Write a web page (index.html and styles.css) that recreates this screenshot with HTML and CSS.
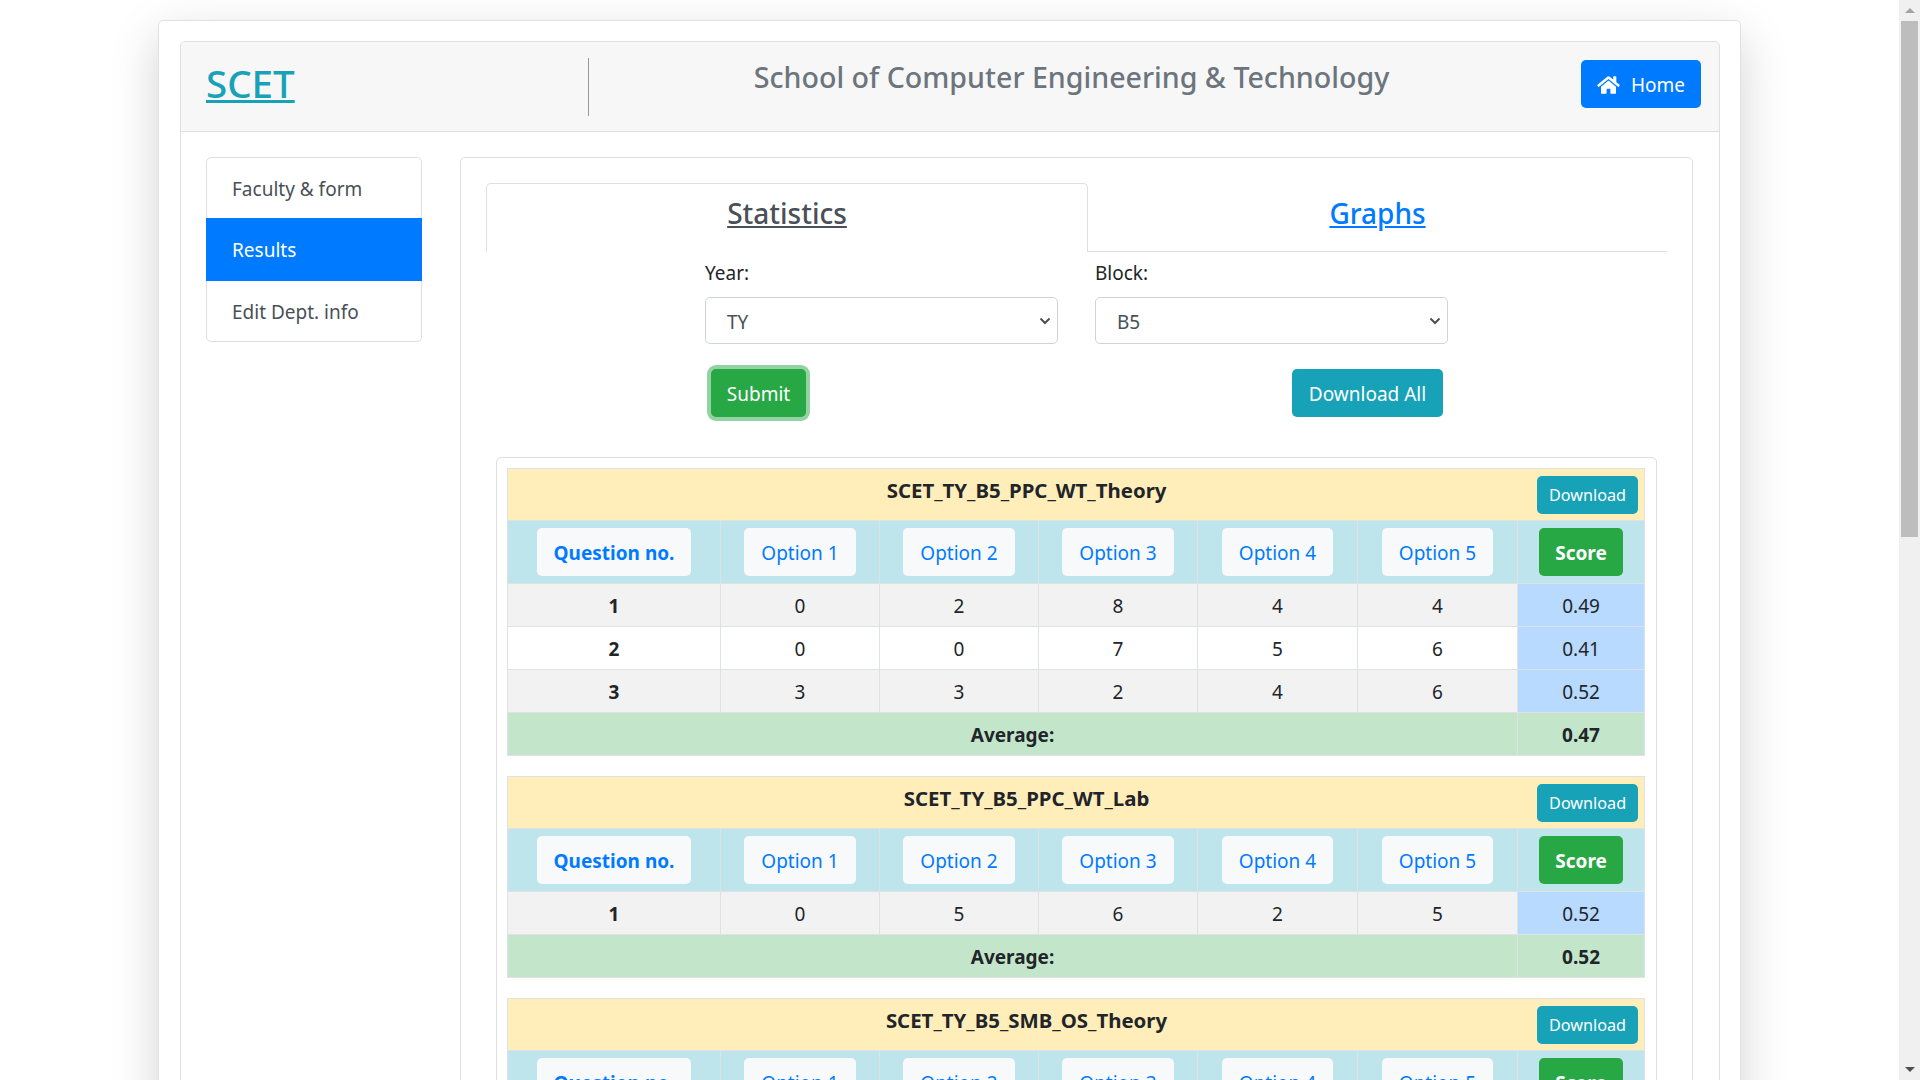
FILE: index.html
```html
<!DOCTYPE html>
<html>
<head>
	<meta charset="utf-8">
	<title>SCET</title>
	<link rel="stylesheet" href="styles.css">
</head>

<body>
	<div class="page">
		<div class="card">
			<div class="inner">
				<div class="top">
					<div class="brand"><a href="#">SCET</a></div>
					<div class="school"><h3>School of Computer Engineering &amp; Technology</h3></div>
					<a class="btn btn-home" href="#">
						<svg class="home-icon" viewBox="0 0 576 512"><path fill="currentColor" d="M280.4 148.3L96 300.1V464a16 16 0 0 0 16 16l112.100-.3a16 16 0 0 0 15.900-16V368a16 16 0 0 1 16-16h64a16 16 0 0 1 16 16v95.600a16 16 0 0 0 16 16.100L464 480a16 16 0 0 0 16-16V300L295.700 148.300a12.200 12.200 0 0 0-15.300 0zM571.600 251.500L488 182.600V44.100a12 12 0 0 0-12-12h-56a12 12 0 0 0-12 12v72.600L318.500 43a48 48 0 0 0-61 0L4.300 251.500a12 12 0 0 0-1.600 16.900l25.500 31A12 12 0 0 0 45.200 301l235.200-193.700a12.200 12.200 0 0 1 15.300 0L530.900 301a12 12 0 0 0 16.900-1.600l25.500-31a12 12 0 0 0-1.700-16.900z"/></svg>
						Home
					</a>
				</div>
				<div class="content">
					<ul class="side">
						<li>Faculty &amp; form</li>
						<li class="active">Results</li>
						<li>Edit Dept. info</li>
					</ul>
					<div class="main">
						<div class="tabs">
							<div class="tab tab-on"><a href="#">Statistics</a></div>
							<div class="tab"><a href="#">Graphs</a></div>
						</div>
						<div class="filters">
							<div class="field">
								<label>Year:</label>
								<select><option>TY</option></select>
								<button class="btn btn-submit">Submit</button>
							</div>
							<div class="field">
								<label>Block:</label>
								<select><option>B5</option></select>
								<button class="btn btn-all">Download All</button>
							</div>
						</div>
						<div class="results" id="results"></div>
					</div>
				</div>
			</div>
		</div>
		<div class="scrollbar">
			<div class="arrow"><span class="tri tri-up"></span></div>
			<div class="thumb"></div>
			<div class="rest"></div>
			<div class="arrow"><span class="tri tri-down"></span></div>
		</div>
	</div>
	<script src="script.js"></script>
</body>
</html>
```
FILE: styles.css
```css
* {
	box-sizing: border-box;
	padding: 0;
	margin: 0;
}
html, body {
	height: 100%;
	overflow: hidden;
}
body {
	background-color: #fff;
	color: #212529;
	font-family: "Noto Sans", "Open Sans", sans-serif;
	font-size: 19px;
	line-height: 30px;
}
a {
	color: #007bff;
}
.page {
	display: flex;
	height: 1080px;
	overflow: hidden;
}
.card {
	flex: none;
	width: 1583px;
	height: 1400px;
	margin: 20px 0 0 158px;
	padding: 20px 20px 0 21px;
	background-color: #fff;
	border: 1px solid #dfe1e5;
	border-radius: 5px;
	box-shadow: 0 16px 48px rgba(0,0,0,.175);
}
.inner {
	border: 1px solid #dfdfdf;
	border-radius: 5px;
	height: 1360px;
}
.top {
	display: flex;
	align-items: flex-start;
	height: 90px;
	background-color: #f7f7f7;
	border-bottom: 1px solid #dfdfdf;
	border-radius: 4px 4px 0 0;
}
.brand {
	width: 408px;
	height: 58px;
	margin-top: 16px;
	padding: 0 0 0 25px;
	border-right: 1px solid #9a9a9a;
	font-size: 38.5px;
	line-height: 50px;
	font-weight: 500;
}
.brand a {
	color: #17a2b8;
	text-decoration-thickness: 3px;
}
.school {
	width: 965px;
	text-align: center;
}
.school h3 {
	margin-top: 16px;
	color: #6c757d;
	font-size: 28.6px;
	line-height: 38px;
	font-weight: 500;
}
.btn {
	display: inline-block;
	padding-top: 2px;
	border: 0;
	border-radius: 5px;
	color: #fff;
	font-family: inherit;
	font-size: 19px;
	text-align: center;
	text-decoration: none;
}
.btn-home {
	display: flex;
	align-items: center;
	justify-content: center;
	gap: 11px;
	width: 120px;
	height: 48px;
	margin: 18px 0 0 27px;
	background-color: #007bff;
}
.home-icon {
	width: 23px;
	height: 20px;
}
.content {
	display: flex;
	padding: 25px 25px 0;
}
.side {
	flex: none;
	width: 216px;
	height: 185px;
	margin-right: 38px;
	list-style: none;
	border: 1px solid #dfdfdf;
	border-radius: 5px;
	color: #495057;
}
.side li {
	height: 60px;
	padding: 16px 25px;
}
.side .active {
	height: 63px;
	margin: 0 -1px;
	padding: 17px 26px;
	background-color: #007bff;
	color: #fff;
}
.main {
	flex: none;
	width: 1233px;
	padding: 25px 25px 0;
	border: 1px solid #dfdfdf;
	border-radius: 5px;
}
.tabs {
	display: flex;
	width: 1181px;
	height: 69px;
	border-bottom: 1px solid #dfdfdf;
}
.tab {
	flex: 1;
	height: 68px;
	font-size: 28px;
	font-weight: 500;
	line-height: 60px;
	text-align: center;
}
.tab-on {
	flex: none;
	width: 602px;
	height: 69px;
	margin-bottom: -1px;
	background-color: #fff;
	border: 1px solid #dfdfdf;
	border-bottom: 0;
	border-radius: 5px 5px 0 0;
	line-height: 58px;
}
.tab-on a {
	color: #495057;
}
.filters {
	display: flex;
	gap: 37px;
	margin: 5px 0 0 219px;
}
.field {
	width: 353px;
}
.field label {
	display: block;
	height: 40px;
	line-height: 32px;
}
.field select {
	display: block;
	width: 100%;
	height: 47px;
	padding: 2px 21px 0;
	appearance: none;
	background: #fff url("data:image/svg+xml,%3Csvg xmlns='http://www.w3.org/2000/svg' width='12' height='8'%3E%3Cpath d='M1.500 1.500L6 6l4.500-4.500' fill='none' stroke='%23495057' stroke-width='2'/%3E%3C/svg%3E") no-repeat right 6px center;
	border: 1px solid #ced4da;
	border-radius: 5px;
	color: #495057;
	font-family: inherit;
	font-size: 19px;
}
.btn-submit {
	width: 95px;
	height: 48px;
	margin: 25px 0 0 6px;
	background-color: #28a745;
	box-shadow: 0 0 0 4px rgba(40,167,69,.5);
}
.btn-all {
	display: block;
	width: 151px;
	height: 48px;
	margin: 25px 0 0 197px;
	background-color: #17a2b8;
}
.results {
	width: 1161px;
	margin: 40px 0 0 10px;
	padding: 10px;
	border: 1px solid #dfdfdf;
	border-radius: 5px;
}
.results table {
	width: 1137px;
	margin-bottom: 20px;
	border-collapse: collapse;
	table-layout: fixed;
	text-align: center;
}
.results td {
	height: 43px;
	padding: 2px 0 0;
	border: 1px solid #dee2e6;
}
.results .title {
	height: 52px;
	padding: 0 6px 0 0;
	background-color: #ffeeba;
}
.title-box {
	display: flex;
	align-items: center;
}
.title-box b {
	flex: 1;
	padding: 0 0 9px 8px;
	font-size: 20.4px;
}
.btn-dl {
	width: 101px;
	height: 38px;
	padding: 0;
	background-color: #17a2b8;
	font-size: 16.2px;
	line-height: 38px;
}
.results .head td {
	height: 63px;
	padding: 0;
	background-color: #bee5eb;
}
.tag {
	display: inline-block;
	height: 48px;
	padding: 0 17px;
	background-color: #f8f9fa;
	border-radius: 5px;
	color: #007bff;
	line-height: 50px;
	vertical-align: middle;
}
.tag-q {
	font-weight: 700;
}
.tag-score {
	padding: 0 16px;
	background-color: #28a745;
	color: #fff;
	font-weight: 700;
}
.odd td {
	background-color: #f2f2f2;
}
.results td.score {
	background-color: #b8daff;
}
.results .avg td {
	background-color: #c3e6cb;
	font-weight: 700;
}
.scrollbar {
	flex: none;
	display: flex;
	flex-direction: column;
	width: 21px;
	margin-left: auto;
	background-color: #f0f0f0;
}
.arrow {
	display: flex;
	align-items: center;
	justify-content: center;
	height: 21px;
}
.tri {
	width: 0;
	height: 0;
	border-left: 5px solid transparent;
	border-right: 5px solid transparent;
}
.tri-up {
	border-bottom: 5px solid #a3a3a3;
}
.tri-down {
	border-top: 5px solid #505050;
}
.thumb {
	width: 17px;
	height: 516px;
	margin-left: 2px;
	background-color: #bdbdbd;
}
.rest {
	flex: 1;
}
```
FILE: script.js
```js
var tables = [
	{ name: 'SCET_TY_B5_PPC_WT_Theory', rows: [[0,2,8,4,4,'0.49'],[0,0,7,5,6,'0.41'],[3,3,2,4,6,'0.52']], avg: '0.47' },
	{ name: 'SCET_TY_B5_PPC_WT_Lab', rows: [[0,5,6,2,5,'0.52']], avg: '0.52' },
	{ name: 'SCET_TY_B5_SMB_OS_Theory', rows: [[0,5,6,2,5,'0.52']], avg: '0.52' }
];

var html = '';
tables.forEach(function(t){
	html += '<table><colgroup><col style="width:213px"><col style="width:159px"><col style="width:159px"><col style="width:159px"><col style="width:160px"><col style="width:160px"><col style="width:127px"></colgroup>';
	html += '<tr><td class="title" colspan="7"><div class="title-box"><b>' + t.name + '</b><a class="btn btn-dl" href="#">Download</a></div></td></tr>';
	html += '<tr class="head"><td><span class="tag tag-q">Question no.</span></td>';
	for(var i = 1; i < 6; i++){
		html += '<td><span class="tag">Option ' + i + '</span></td>';
	}
	html += '<td><span class="tag tag-score">Score</span></td></tr>';
	t.rows.forEach(function(r, index){
		html += '<tr class="' + (index % 2 == 0 ? 'odd' : '') + '"><td><b>' + (index + 1) + '</b></td>';
		for(var j = 0; j < 5; j++){
			html += '<td>' + r[j] + '</td>';
		}
		html += '<td class="score">' + r[5] + '</td></tr>';
	});
	html += '<tr class="avg"><td colspan="6">Average:</td><td>' + t.avg + '</td></tr></table>';
});
document.getElementById('results').innerHTML = html;
```
